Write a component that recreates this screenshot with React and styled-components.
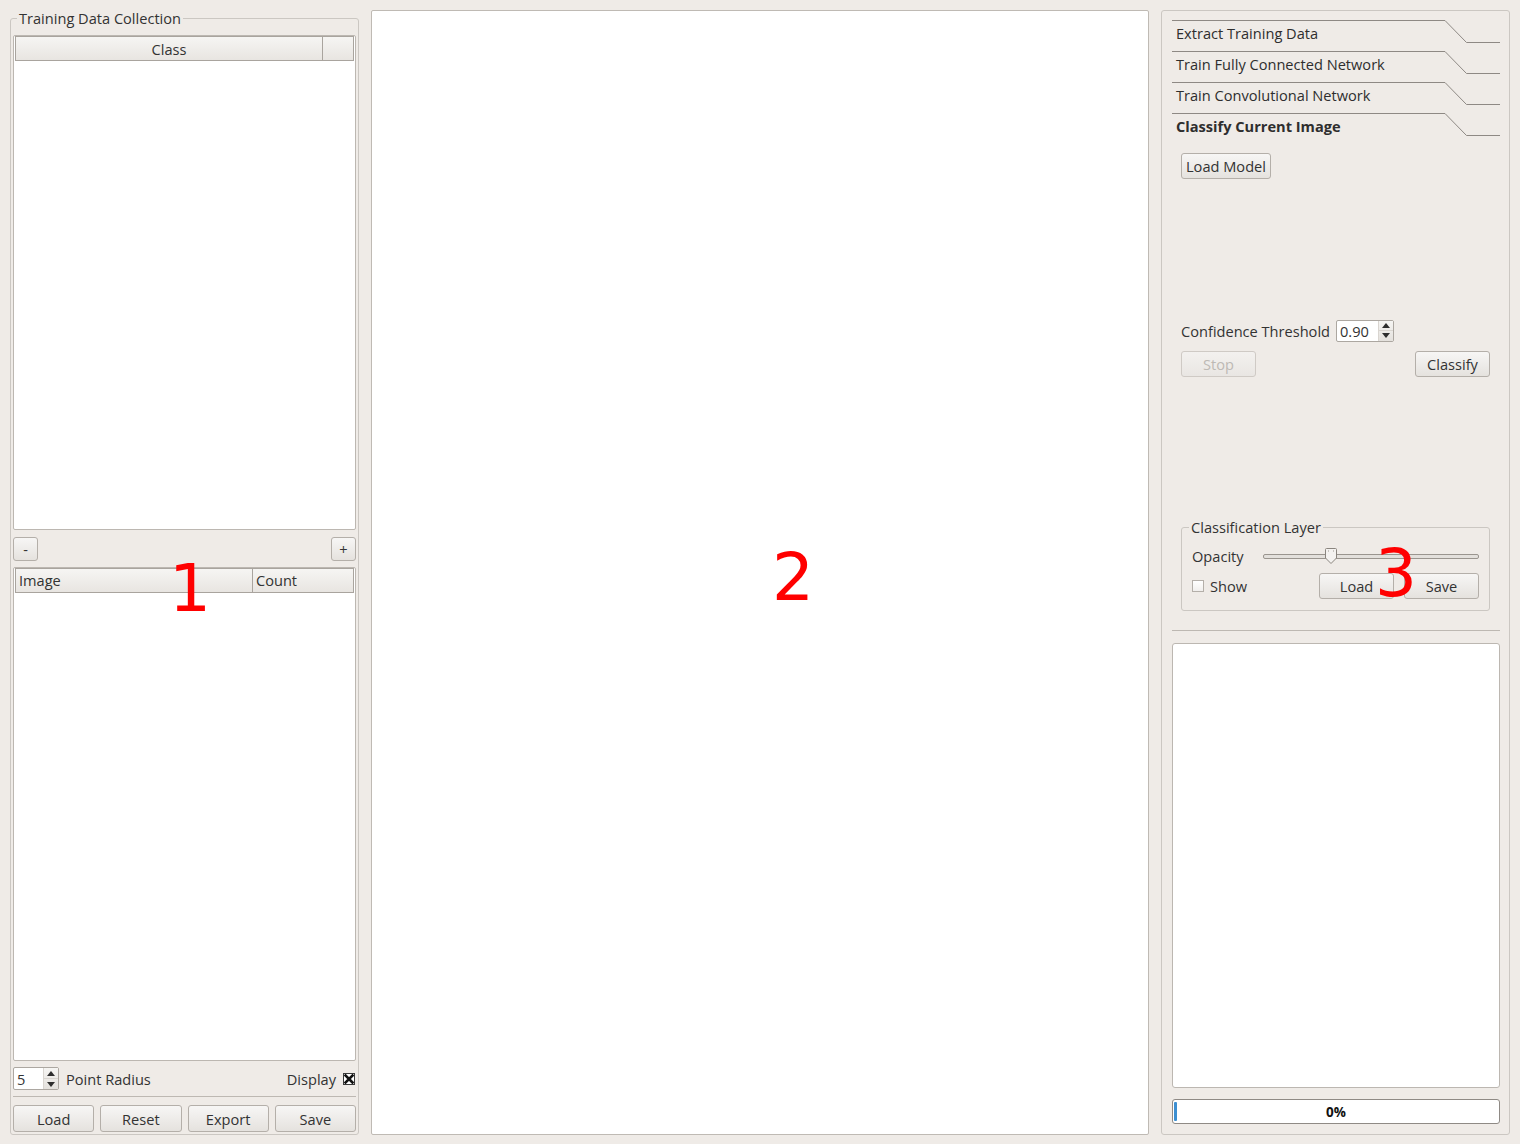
import React from 'react';
import styled, { createGlobalStyle } from 'styled-components';

const FS = '14.6px';

const Global = createGlobalStyle`
  html, body { margin: 0; padding: 0; background: #efebe7; }
  body { font-family: "Open Sans", "DejaVu Sans", sans-serif; font-size: ${FS}; color: #3a3a3a; }
  * { box-sizing: border-box; }
`;

const Window = styled.div`
  position: relative;
  width: 1520px;
  height: 1144px;
  padding: 10px 10px 9px 10px;
  display: flex;
  gap: 12px;
  background: #efebe7;
  overflow: hidden;
`;

/* ---------- generic widgets ---------- */

const Button = styled.div`
  height: ${p => p.$h || 26}px;
  width: ${p => (p.$w ? `${p.$w}px` : 'auto')};
  flex: ${p => (p.$grow ? 1 : 'none')};
  border: 1px solid ${p => (p.$disabled ? '#cfcac5' : '#b4afa9')};
  border-radius: 3px;
  background: ${p => (p.$disabled ? 'linear-gradient(#f3f1ef, #e9e6e3)' : 'linear-gradient(#f7f6f5, #e5e2de)')};
  color: ${p => (p.$disabled ? '#bdb9b4' : '#333')};
  display: flex;
  align-items: center;
  justify-content: center;
  padding: 0 4px;
  font-size: ${FS};
  white-space: nowrap;
`;

const SpinBox = styled.div`
  display: flex;
  width: ${p => p.$w}px;
  height: ${p => p.$h}px;
  border: 1px solid #aca7a1;
  border-radius: 2px;
  background: #fff;
  flex: none;
`;

const SpinValue = styled.div`
  flex: 1;
  display: flex;
  align-items: center;
  padding-left: 3px;
  font-size: ${FS};
  color: #333;
`;

const SpinArrows = styled.div`
  width: 15px;
  display: flex;
  flex-direction: column;
  border-left: 1px solid #d9d5d0;
  background: linear-gradient(#f6f5f3, #e4e1dd);
`;

const Arrow = styled.div`
  flex: 1;
  display: flex;
  align-items: center;
  justify-content: center;
  & + & { border-top: 1px solid #d9d5d0; }
`;

const Up = () => (
  <svg width="8" height="5" viewBox="0 0 8 5"><path d="M0 5 L4 0 L8 5 Z" fill="#2e2e2e" /></svg>
);
const Down = () => (
  <svg width="8" height="5" viewBox="0 0 8 5"><path d="M0 0 L4 5 L8 0 Z" fill="#2e2e2e" /></svg>
);

const Spinner = ({ value, w, h }) => (
  <SpinBox $w={w} $h={h}>
    <SpinValue>{value}</SpinValue>
    <SpinArrows>
      <Arrow><Up /></Arrow>
      <Arrow><Down /></Arrow>
    </SpinArrows>
  </SpinBox>
);

const CheckBox = styled.div`
  width: 12px;
  height: 12px;
  border: 1px solid ${p => (p.$checked ? '#3a3a3a' : '#b4afa9')};
  background: ${p => (p.$checked ? '#fff' : 'linear-gradient(#ffffff, #f1efed)')};
  display: flex;
  align-items: center;
  justify-content: center;
  flex: none;
`;

const Cross = () => (
  <svg width="10" height="10" viewBox="0 0 10 10">
    <path d="M1.5 1.5 L8.5 8.5 M8.5 1.5 L1.5 8.5" stroke="#111" strokeWidth="2.6" strokeLinecap="square" />
  </svg>
);

const Label = styled.span`
  font-size: ${FS};
  color: #333;
  white-space: nowrap;
  width: ${p => (p.$w ? `${p.$w}px` : 'auto')};
  flex: none;
`;

/* ---------- group box ---------- */

const GroupOuter = styled.div`
  padding-top: ${p => p.$top || 0}px;
  display: flex;
  flex-direction: column;
  ${p => p.$fill && 'flex: 1; min-height: 0;'}
`;

const GroupFrame = styled.div`
  position: relative;
  flex: 1;
  min-height: 0;
  border: 1px solid #cbc7c2;
  border-radius: 3px;
  display: flex;
  flex-direction: column;
  padding: ${p => p.$pad};
`;

const GroupTitle = styled.span`
  position: absolute;
  top: -10px;
  left: ${p => p.$left}px;
  padding: 0 2px;
  background: #efebe7;
  font-size: ${FS};
  line-height: 18px;
  color: #333;
  white-space: nowrap;
`;

/* ---------- left panel ---------- */

const LeftColumn = styled.div`
  width: 349px;
  flex: none;
  display: flex;
  flex-direction: column;
`;

const Table = styled.div`
  flex: 1;
  min-height: 0;
  background: #fff;
  border: 1px solid #bcb7b1;
  border-radius: 2px;
  padding: 0 1px;
  display: flex;
  flex-direction: column;
`;

const HeaderRow = styled.div`
  display: flex;
  height: 25px;
`;

const HeaderCell = styled.div`
  flex: ${p => (p.$w ? 'none' : 1)};
  width: ${p => (p.$w ? `${p.$w}px` : 'auto')};
  border: 1px solid #a9a49e;
  & + & { border-left: none; }
  background: linear-gradient(#f6f5f3, #e8e5e1);
  display: flex;
  align-items: center;
  justify-content: ${p => (p.$left ? 'flex-start' : 'center')};
  padding: 0 3px;
  font-size: ${FS};
  color: #333;
`;

const SmallButtonRow = styled.div`
  display: flex;
  justify-content: space-between;
  margin: 7px 0 6px;
`;

const RadiusRow = styled.div`
  display: flex;
  align-items: center;
  margin-top: 6px;
  height: 23px;
  gap: 7px;
`;

const Spacer = styled.div`
  flex: 1;
`;

const Separator = styled.div`
  height: 1px;
  background: #bdb8b2;
  margin: ${p => p.$m};
`;

const BottomButtons = styled.div`
  display: flex;
  gap: 6px;
`;

/* ---------- canvas ---------- */

const Canvas = styled.div`
  flex: 1;
  background: #fff;
  border: 1px solid #bfbab4;
  border-radius: 2px;
`;

/* ---------- right panel ---------- */

const RightPanel = styled.div`
  width: 349px;
  flex: none;
  border: 1px solid #cbc7c2;
  border-radius: 3px;
  display: flex;
  flex-direction: column;
  padding: 9px 9px 10px 10px;
`;

const Tab = styled.div`
  position: relative;
  height: 31px;
  display: flex;
  align-items: flex-start;
  padding: 2px 0 0 4px;
  font-size: ${FS};
  font-weight: ${p => (p.$active ? 700 : 400)};
  color: #2e2e2e;
  line-height: 22px;
`;

const TabShape = styled.svg`
  position: absolute;
  left: 0;
  top: 0;
`;

const TabText = styled.span`
  position: relative;
`;

const ToolTab = ({ children, active }) => (
  <Tab $active={active}>
    <TabShape width="328" height="31" viewBox="0 0 328 31">
      <path d="M0 0.5 H273 L294.5 22.5 H328" stroke="#8e8984" strokeWidth="1" fill="none" />
    </TabShape>
    <TabText>{children}</TabText>
  </Tab>
);

const Page = styled.div`
  display: flex;
  flex-direction: column;
  padding: 0 10px 0 9px;
`;

const Row = styled.div`
  display: flex;
  align-items: center;
  gap: ${p => p.$gap || 0}px;
  justify-content: ${p => p.$justify || 'flex-start'};
  margin-top: ${p => p.$mt || 0}px;
  height: ${p => (p.$h ? `${p.$h}px` : 'auto')};
`;

const LayerGroup = styled.div`
  margin-top: 150px;
  height: 84px;
  display: flex;
  flex-direction: column;
`;

const SliderWrap = styled.div`
  position: relative;
  flex: 1;
  height: 16px;
  display: flex;
  align-items: center;
`;

const Groove = styled.div`
  width: 100%;
  height: 5px;
  border: 1px solid #9a958f;
  border-radius: 2px;
  background: #e3e0dc;
`;

const Handle = styled.svg`
  position: absolute;
  left: ${p => p.$left}px;
  top: 0;
`;

const ListBox = styled.div`
  flex: 1;
  min-height: 0;
  margin-top: 12px;
  background: #fff;
  border: 1px solid #bcb7b1;
  border-radius: 3px;
`;

const Progress = styled.div`
  position: relative;
  margin-top: 11px;
  height: 25px;
  background: #fff;
  border: 1px solid #8f8a85;
  border-radius: 3px;
  display: flex;
  align-items: center;
  justify-content: center;
  font-size: 13.5px;
  font-weight: 700;
  color: #111;
`;

const Chunk = styled.div`
  position: absolute;
  left: 1px;
  top: 2px;
  bottom: 2px;
  width: 3px;
  border-radius: 1px;
  background: #3d8fd1;
`;

const Marker = styled.div`
  position: absolute;
  left: ${p => p.$x}px;
  top: ${p => p.$y}px;
  font-family: "DejaVu Sans", sans-serif;
  font-size: 66px;
  line-height: 1;
  color: #ff0000;
  pointer-events: none;
`;

export default function App() {
  return (
    <>
      <Global />
      <Window>
        <LeftColumn>
          <GroupOuter $top={8} $fill>
            <GroupFrame $pad="16px 2px 2px 2px">
              <GroupTitle $left={6}>Training Data Collection</GroupTitle>
              <Table>
                <HeaderRow>
                  <HeaderCell>Class</HeaderCell>
                  <HeaderCell $w={31} />
                </HeaderRow>
              </Table>
              <SmallButtonRow>
                <Button $w={25} $h={24}>-</Button>
                <Button $w={25} $h={24}>+</Button>
              </SmallButtonRow>
              <Table>
                <HeaderRow>
                  <HeaderCell $left>Image</HeaderCell>
                  <HeaderCell $left $w={101}>Count</HeaderCell>
                </HeaderRow>
              </Table>
              <RadiusRow>
                <Spinner value="5" w={46} h={23} />
                <Label>Point Radius</Label>
                <Spacer />
                <Label>Display</Label>
                <CheckBox $checked style={{ marginRight: 1 }}><Cross /></CheckBox>
              </RadiusRow>
              <Separator $m="6px 0 8px" />
              <BottomButtons>
                <Button $grow $h={27}>Load</Button>
                <Button $grow $h={27}>Reset</Button>
                <Button $grow $h={27}>Export</Button>
                <Button $grow $h={27}>Save</Button>
              </BottomButtons>
            </GroupFrame>
          </GroupOuter>
        </LeftColumn>

        <Canvas />

        <RightPanel>
          <ToolTab>Extract Training Data</ToolTab>
          <ToolTab>Train Fully Connected Network</ToolTab>
          <ToolTab>Train Convolutional Network</ToolTab>
          <ToolTab active>Classify Current Image</ToolTab>
          <Page>
            <Row $mt={9}>
              <Button $h={26}>Load Model</Button>
            </Row>
            <Row $mt={141} $h={21} $gap={6}>
              <Label>Confidence Threshold</Label>
              <Spinner value="0.90" w={58} h={22} />
            </Row>
            <Row $mt={10} $justify="space-between">
              <Button $w={75} $disabled>Stop</Button>
              <Button $w={75}>Classify</Button>
            </Row>
            <LayerGroup>
              <GroupFrame $pad="18px 10px 10px 10px">
                <GroupTitle $left={7}>Classification Layer</GroupTitle>
                <Row $h={20}>
                  <Label $w={71}>Opacity</Label>
                  <SliderWrap>
                    <Groove />
                    <Handle $left={62} width="12" height="16" viewBox="0 0 12 16">
                      <path d="M0.5 1.5 Q0.5 0.5 1.5 0.5 H10.5 Q11.5 0.5 11.5 1.5 V10 L6 15.5 L0.5 10 Z" fill="#f4f2f0" stroke="#8a857f" />
                      <path d="M3 3 h1 M8 3 h1" stroke="#9a958f" />
                    </Handle>
                  </SliderWrap>
                </Row>
                <Row $mt={7} $h={26}>
                  <CheckBox />
                  <Label style={{ marginLeft: 6 }}>Show</Label>
                  <Spacer />
                  <Button $w={75}>Load</Button>
                  <Button $w={75} style={{ marginLeft: 10 }}>Save</Button>
                </Row>
              </GroupFrame>
            </LayerGroup>
          </Page>
          <Separator $m="19px 0 0" />
          <ListBox />
          <Progress>
            <Chunk />
            0%
          </Progress>
        </RightPanel>

        <Marker $x={169} $y={556}>1</Marker>
        <Marker $x={772} $y={545}>2</Marker>
        <Marker $x={1375} $y={541}>3</Marker>
      </Window>
    </>
  );
}
